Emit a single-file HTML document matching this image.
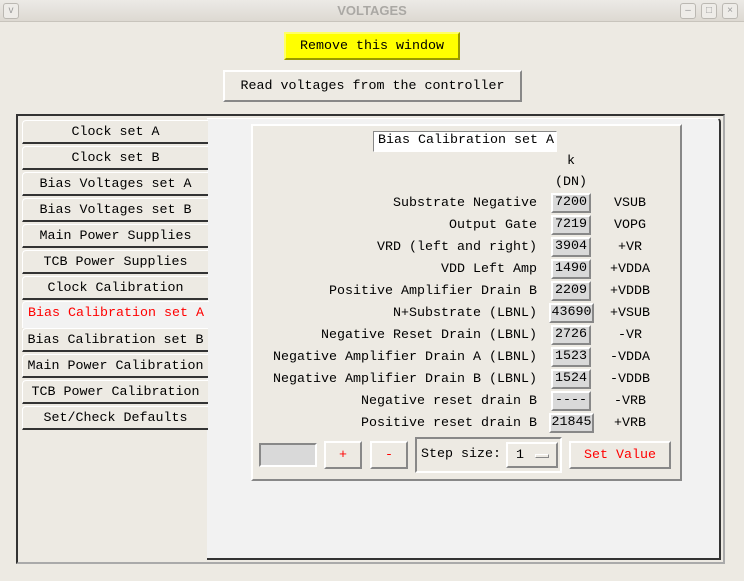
<!DOCTYPE html>
<html><head><style>
*{margin:0;padding:0;box-sizing:border-box}
body{width:744px;height:581px;background:#edeae3;font-family:"Liberation Mono",monospace;font-size:13.33px;color:#000;position:relative;overflow:hidden}
.a{position:absolute;white-space:pre}
.title{left:0;top:0;width:744px;height:22px;background:linear-gradient(#eceae6,#ddd9d2);border-bottom:1px solid #c8c4bc;font-family:"Liberation Sans",sans-serif;font-weight:bold;font-size:13px;color:#aaa8a4;text-align:center;line-height:22px}
.wb{top:3px;width:16px;height:16px;border:1px solid #bbb8b2;border-radius:3px;background:#eeece8;color:#999;font-size:10px;line-height:14px;text-align:center;font-family:"Liberation Sans",sans-serif}
.btn{border:2px solid;border-color:#fff #888 #888 #fff;background:#edeae3;text-align:center}
.tab{left:22px;width:186px;height:24px;border-top:1px solid #fff;border-left:1px solid #fff;border-bottom:2px solid #333;border-radius:4px 0 0 0;background:#edeae3;text-align:center;line-height:24px}
.lab{right:207px;text-align:right}
.val{width:40px;height:20px;background:#d9d9d9;border:2px solid;border-color:#fff #888 #888 #fff;text-align:center;line-height:16px}
.code{left:614px}
.p{margin-top:2px}
</style></head><body>
<div class="a title">VOLTAGES</div>
<div class="a wb" style="left:3px">v</div>
<div class="a wb" style="left:680px">–</div>
<div class="a wb" style="left:701px">□</div>
<div class="a wb" style="left:722px">×</div>

<div class="a" style="left:284px;top:32px;width:176px;height:28px;background:#ffff00;border:2px solid;border-color:#ffff66 #999900 #999900 #ffff66;text-align:center;line-height:25px">Remove this window</div>
<div class="a btn" style="left:223px;top:70px;width:299px;height:32px;line-height:29px">Read voltages from the controller</div>

<div class="a" style="left:16px;top:114px;width:709px;height:450px;border:2px solid;border-color:#333 #aaa #aaa #333;background:#edeae3"></div>
<div class="a" style="left:207px;top:118px;width:514px;height:442px;background:#f2f2f2;border-top:1px solid #fff;border-right:2px solid #333;border-bottom:2px solid #333;border-radius:0 4px 0 0"></div>

<div class="a tab" style="top:120px">Clock set A</div>
<div class="a tab" style="top:146px">Clock set B</div>
<div class="a tab" style="top:172px">Bias Voltages set A</div>
<div class="a tab" style="top:198px">Bias Voltages set B</div>
<div class="a tab" style="top:224px">Main Power Supplies</div>
<div class="a tab" style="top:250px">TCB Power Supplies</div>
<div class="a tab" style="top:276px">Clock Calibration</div>
<div class="a tab" style="top:301px;height:27px;background:#f2f2f2;color:#f00;border-bottom:none;width:187px">Bias Calibration set A</div>
<div class="a tab" style="top:328px">Bias Calibration set B</div>
<div class="a tab" style="top:354px">Main Power Calibration</div>
<div class="a tab" style="top:380px">TCB Power Calibration</div>
<div class="a tab" style="top:406px">Set/Check Defaults</div>

<div class="a" style="left:251px;top:124px;width:431px;height:357px;background:#edeae3;border:2px solid;border-color:#fff #888 #888 #fff"></div>
<div class="a" style="left:373px;top:131px;width:184px;height:21px;background:#fff;border:1px solid;border-color:#888 #fff #fff #888;line-height:18px;padding-left:4px">Bias Calibration set A</div>
<div class="a" style="left:567px;top:154px">k</div>
<div class="a" style="left:555px;top:175px">(DN)</div>

<div class="a lab" style="top:196px">Substrate Negative</div>
<div class="a lab" style="top:218px">Output Gate</div>
<div class="a lab" style="top:240px">VRD (left and right)</div>
<div class="a lab" style="top:262px">VDD Left Amp</div>
<div class="a lab" style="top:284px">Positive Amplifier Drain B</div>
<div class="a lab" style="top:306px">N+Substrate (LBNL)</div>
<div class="a lab" style="top:328px">Negative Reset Drain (LBNL)</div>
<div class="a lab" style="top:350px">Negative Amplifier Drain A (LBNL)</div>
<div class="a lab" style="top:372px">Negative Amplifier Drain B (LBNL)</div>
<div class="a lab" style="top:394px">Negative reset drain B</div>
<div class="a lab" style="top:416px">Positive reset drain B</div>

<div class="a val" style="left:551px;top:193px">7200</div>
<div class="a val" style="left:551px;top:215px">7219</div>
<div class="a val" style="left:551px;top:237px">3904</div>
<div class="a val" style="left:551px;top:259px">1490</div>
<div class="a val" style="left:551px;top:281px">2209</div>
<div class="a val" style="left:549px;top:303px;width:45px">43690</div>
<div class="a val" style="left:551px;top:325px">2726</div>
<div class="a val" style="left:551px;top:347px">1523</div>
<div class="a val" style="left:551px;top:369px">1524</div>
<div class="a val" style="left:551px;top:391px">----</div>
<div class="a val" style="left:549px;top:413px;width:45px">21845</div>

<div class="a code" style="top:196px">VSUB</div>
<div class="a code" style="top:218px">VOPG</div>
<div class="a code" style="top:240px;left:618px">+VR</div>
<div class="a code" style="top:262px;left:610px">+VDDA</div>
<div class="a code" style="top:284px;left:610px">+VDDB</div>
<div class="a code" style="top:306px;left:610px">+VSUB</div>
<div class="a code" style="top:328px;left:618px">-VR</div>
<div class="a code" style="top:350px;left:610px">-VDDA</div>
<div class="a code" style="top:372px;left:610px">-VDDB</div>
<div class="a code" style="top:394px">-VRB</div>
<div class="a code" style="top:416px">+VRB</div>

<div class="a" style="left:259px;top:443px;width:58px;height:24px;background:#d9d9d9;border:2px solid;border-color:#888 #fff #fff #888"></div>
<div class="a btn" style="left:324px;top:441px;width:38px;height:28px;color:#f00;line-height:25px">+</div>
<div class="a btn" style="left:370px;top:441px;width:38px;height:28px;color:#f00;line-height:25px">-</div>
<div class="a" style="left:415px;top:437px;width:147px;height:36px;border:2px solid;border-color:#888 #fff #fff #888"></div>
<div class="a" style="left:421px;top:447px">Step size:</div>
<div class="a btn" style="left:506px;top:442px;width:52px;height:26px;line-height:23px;text-align:left;padding-left:8px">1</div>
<div class="a" style="left:535px;top:454px;width:14px;height:4px;border:1px solid;border-color:#fff #888 #888 #fff"></div>
<div class="a btn" style="left:569px;top:441px;width:102px;height:28px;color:#f00;line-height:25px">Set Value</div>
</body></html>
